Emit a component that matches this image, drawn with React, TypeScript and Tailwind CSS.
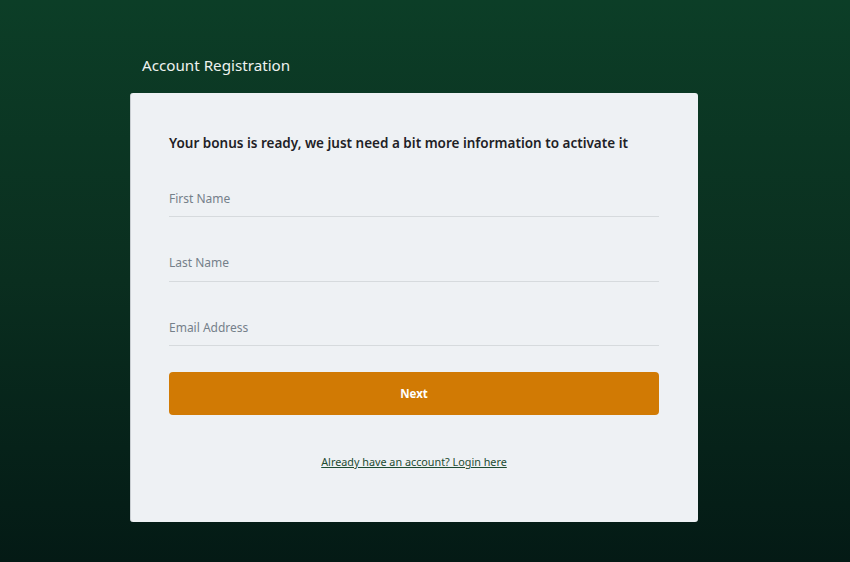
export default function App() {
  return (
    <div
      className="min-h-[562px] w-full bg-gradient-to-b from-[#0c3e27] via-[#0a2e1f] to-[#041a15] pt-[53px] pb-10"
      style={{ fontFamily: '"Noto Sans", "Open Sans", sans-serif' }}
    >
      <div className="ml-[130px] w-[568px]">
        <h1 className="pl-[12px] text-[15.2px] leading-[24px] text-[#eef2ef]">Account Registration</h1>

        <div className="mt-[16px] h-[429px] rounded-[3px] border-l border-[#c9ced2] bg-[#eef1f4] pl-[38px] pr-[39px] pt-[38px]">
          <p className="whitespace-nowrap text-[13.5px] font-semibold leading-[24px] text-[#1e2126]">
            Your bonus is ready, we just need a bit more information to activate it
          </p>

          <div className="mt-[25px] flex flex-col gap-[27.5px]">
            {["First Name", "Last Name", "Email Address"].map((label) => (
              <input
                key={label}
                placeholder={label}
                className="h-[37px] w-full border-b border-[#d6dadd] bg-transparent text-[12px] text-[#5f6b70] outline-none placeholder:text-[#75808a]"
              />
            ))}
          </div>

          <button className="mt-[26px] h-[43px] w-full rounded-[4px] bg-[#d17a04] text-[11.5px] font-bold text-white">
            Next
          </button>

          <div className="mt-[33px] text-center">
            <a href="#" className="text-[10.8px] text-[#1d4b32] underline">
              Already have an account? Login here
            </a>
          </div>
        </div>
      </div>
    </div>
  );
}
